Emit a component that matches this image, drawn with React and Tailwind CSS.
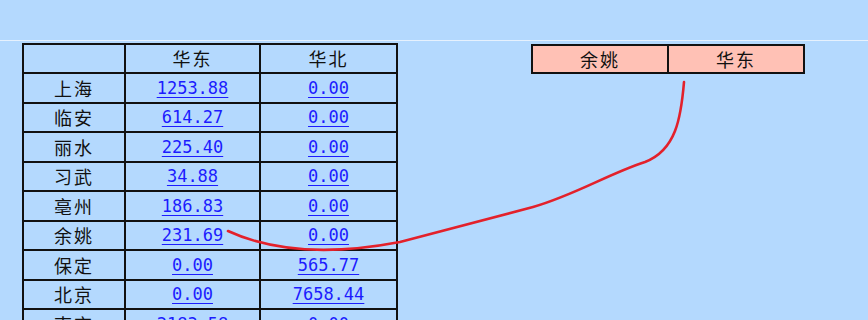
import React from 'react';

const rows = [
  ['上海', '1253.88', '0.00'],
  ['临安', '614.27', '0.00'],
  ['丽水', '225.40', '0.00'],
  ['习武', '34.88', '0.00'],
  ['亳州', '186.83', '0.00'],
  ['余姚', '231.69', '0.00'],
  ['保定', '0.00', '565.77'],
  ['北京', '0.00', '7658.44'],
  ['南京', '2183.58', '0.00'],
];

const cjk = { fontFamily: '"Noto Sans CJK SC", sans-serif' };

export default function App() {
  return (
    <div className="relative w-[868px] h-[320px] overflow-hidden bg-[#b4d9fe] text-[#111]" style={cjk}>
      {/* top band */}
      <div className="h-[40px]" />
      <div className="h-px bg-[#e6f1fd]" />

      <div className="flex items-start pl-[22px] pt-[2px]">
        {/* Data table */}
        <table className="border-collapse w-[374px] table-fixed">
          <colgroup>
            <col className="w-[102px]" />
            <col className="w-[135px]" />
            <col className="w-[137px]" />
          </colgroup>
          <thead>
            <tr>
              <th className="border-2 border-[#111] h-[29px] font-normal text-[18px] tracking-[2px]"></th>
              <th className="border-2 border-[#111] h-[29px] font-normal text-[18px] tracking-[2px]">华东</th>
              <th className="border-2 border-[#111] h-[29px] font-normal text-[18px] tracking-[2px]">华北</th>
            </tr>
          </thead>
          <tbody>
            {rows.map((r) => (
              <tr key={r[0]}>
                <td className="border-2 border-[#111] h-[29.5px] text-center text-[18px] tracking-[2px] leading-none">
                  {r[0]}
                </td>
                {[r[1], r[2]].map((v, i) => (
                  <td key={i} className="border-2 border-[#111] h-[29.5px] text-center leading-none">
                    <a
                      href="#"
                      className="text-[#1c1cff] underline underline-offset-[3px] text-[17px]"
                      style={{ fontFamily: '"DejaVu Sans Mono", monospace' }}
                    >
                      {v}
                    </a>
                  </td>
                ))}
              </tr>
            ))}
          </tbody>
        </table>

        {/* Selected cell box */}
        <div className="ml-[133px] mt-[1px] flex w-[274px] h-[30px] border-2 border-[#111] bg-[#ffc1b5] text-[18px] tracking-[2px]">
          <div className="w-[136px] flex items-center justify-center border-r-2 border-[#111]">余姚</div>
          <div className="flex-1 flex items-center justify-center">华东</div>
        </div>
      </div>

      {/* red annotation stroke */}
      <svg className="absolute inset-0 pointer-events-none" width="868" height="320" viewBox="0 0 868 320">
        <path
          d="M228 231 Q295 262 400 242 L533 207 C575 195 608 174 645 162 C676 150 681 118 684 82"
          fill="none"
          stroke="#e3212b"
          strokeWidth="2.6"
          strokeLinecap="round"
        />
      </svg>
    </div>
  );
}
